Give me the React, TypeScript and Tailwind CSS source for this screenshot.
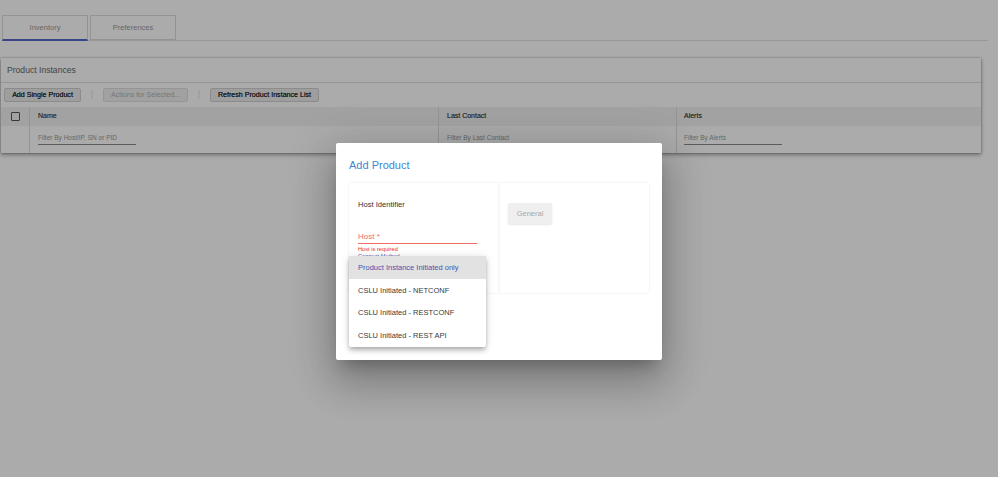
import React from "react";

export default function App() {
  return (
    <div className="relative w-[998px] h-[477px] bg-white overflow-hidden font-['Liberation_Sans',Arial,sans-serif]">
      {/* Tabs */}
      <div className="pt-[15px] pl-[2px] w-[988px]">
        <div className="flex border-b border-[#e2e2e2]">
          <div className="w-[86px] h-[26px] border border-[#dcdcdc] border-b-[2px] border-b-[#5566c8] flex items-center justify-center pt-[1px] text-[7.5px] text-[#999] mb-[-1px]">
            Inventory
          </div>
          <div className="w-[86px] h-[25px] ml-[2px] border border-[#dcdcdc] flex items-center justify-center pt-[1px] text-[7.5px] text-[#999]">
            Preferences
          </div>
        </div>
      </div>

      {/* Card */}
      <div className="mt-[17px] ml-[1px] w-[980px] bg-white shadow-[0_2px_4px_rgba(0,0,0,0.35),0_0_2px_rgba(0,0,0,0.3)]">
        <div className="h-[25px] flex items-center px-[6px] text-[8.6px] text-[#666] border-b border-[#dedede]">
          Product Instances
        </div>
        <div className="h-[24px] flex items-center pl-[3px] text-[7.1px]">
          <div className="w-[77px] h-[14px] flex items-center justify-center bg-[#ececec] border border-[#cfcfcf] rounded-[2px] text-[#2e2e2e] [text-shadow:0_0_0.3px_#2e2e2e]">
            Add Single Product
          </div>
          <div className="w-[22px] flex justify-center text-[#e0e0e0] text-[9px]">|</div>
          <div className="w-[85px] h-[14px] flex items-center justify-center bg-[#f0f0f0] border border-[#dedede] rounded-[2px] text-[#b0b0b0]">
            Actions for Selected...
          </div>
          <div className="w-[22px] flex justify-center text-[#e0e0e0] text-[9px]">|</div>
          <div className="w-[109px] h-[14px] flex items-center justify-center bg-[#ececec] border border-[#cfcfcf] rounded-[2px] text-[#2e2e2e] [text-shadow:0_0_0.3px_#2e2e2e]">
            Refresh Product Instance List
          </div>
        </div>
        <div className="grid grid-cols-[28px_409px_238px_305px]">
          {/* header */}
          <div className="h-[19px] bg-[#f2f2f2] flex items-center justify-center">
            <div className="w-[9px] h-[9px] border-[1.5px] border-[#555] rounded-[1px]" />
          </div>
          <div className="h-[19px] bg-[#f2f2f2] border-l border-[#dddddd] flex items-center pl-[8px] text-[7px] text-[#555] [text-shadow:0_0_0.3px_#555]">
            Name
          </div>
          <div className="h-[19px] bg-[#f2f2f2] border-l border-[#dddddd] flex items-center pl-[8px] text-[7px] text-[#555] [text-shadow:0_0_0.3px_#555]">
            Last Contact
          </div>
          <div className="h-[19px] bg-[#f2f2f2] border-l border-[#dddddd] flex items-center pl-[7px] text-[7px] text-[#555] [text-shadow:0_0_0.3px_#555]">
            Alerts
          </div>
          {/* filters */}
          <div className="h-[27px]" />
          <div className="h-[27px] border-l border-[#dddddd] pl-[8px] pt-[8px]">
            <div className="w-[98px] h-[11px] border-b border-[#8a8a8a] text-[6.5px] text-[#999] leading-[8px]">
              Filter By Host/IP, SN or PID
            </div>
          </div>
          <div className="h-[27px] border-l border-[#dddddd] pl-[8px] pt-[8px]">
            <div className="w-[98px] h-[11px] border-b border-[#8a8a8a] text-[6.5px] text-[#999] leading-[8px]">
              Filter By Last Contact
            </div>
          </div>
          <div className="h-[27px] border-l border-[#dddddd] pl-[7px] pt-[8px]">
            <div className="w-[98px] h-[11px] border-b border-[#8a8a8a] text-[6.5px] text-[#999] leading-[8px]">
              Filter By Alerts
            </div>
          </div>
        </div>
      </div>

      {/* Backdrop */}
      <div className="absolute inset-0 bg-black/[0.33]" />

      {/* Modal */}
      <div className="absolute left-[336px] top-[143px] w-[326px] h-[217px] bg-white rounded-[2px] shadow-[0_11px_15px_-7px_rgba(0,0,0,0.25),0_24px_38px_3px_rgba(0,0,0,0.16),0_9px_46px_8px_rgba(0,0,0,0.14)] pt-[15px] px-[13px]">
        <div className="text-[11px] leading-[15px] text-[#3f86d4]">Add Product</div>
        <div className="mt-[10px] flex w-[300px] h-[110px]">
          <div className="w-[150px] h-full shadow-[0_0_2px_rgba(0,0,0,0.1)] pl-[9px] pt-[17px]">
            <div className="text-[7.6px] leading-[10px] text-[#333]">Host Identifier</div>
            <div className="mt-[22px] w-[119px] border-b border-[#f06a6a] h-[12px] text-[8px] leading-[10px] text-[#f26b6b]">
              Host *
            </div>
            <div className="mt-[2px] text-[5.7px] leading-[7px] text-[#ee2a2a]">Host is required</div>
            <div className="text-[5.7px] leading-[6px] text-[#5b63b5]">Connect Method</div>
          </div>
          <div className="w-[150px] h-full shadow-[0_0_2px_rgba(0,0,0,0.1)] pl-[9px] pt-[20px]">
            <div className="w-[44px] h-[21px] bg-[#efefef] rounded-[2px] shadow-[0_1px_2px_rgba(0,0,0,0.1)] flex items-center justify-center text-[7.5px] text-[#a8a8a8]">
              General
            </div>
          </div>
        </div>
      </div>

      {/* Dropdown menu */}
      <div className="absolute left-[349px] top-[256px] w-[137px] bg-white rounded-[2px] shadow-[0_2px_4px_-1px_rgba(0,0,0,0.2),0_4px_5px_0_rgba(0,0,0,0.14),0_1px_10px_0_rgba(0,0,0,0.12)] text-[7.5px]">
        <div className="h-[22.75px] bg-[#e2e2e2] flex items-center pl-[9px] text-[#4752ae]">
          Product Instance Initiated only
        </div>
        <div className="h-[22.75px] flex items-center pl-[9px] text-[#3a3a3a]">CSLU Initiated - NETCONF</div>
        <div className="h-[22.75px] flex items-center pl-[9px] text-[#3a3a3a]">CSLU Initiated - RESTCONF</div>
        <div className="h-[22.75px] flex items-center pl-[9px] text-[#3a3a3a]">CSLU Initiated - REST API</div>
      </div>
    </div>
  );
}
